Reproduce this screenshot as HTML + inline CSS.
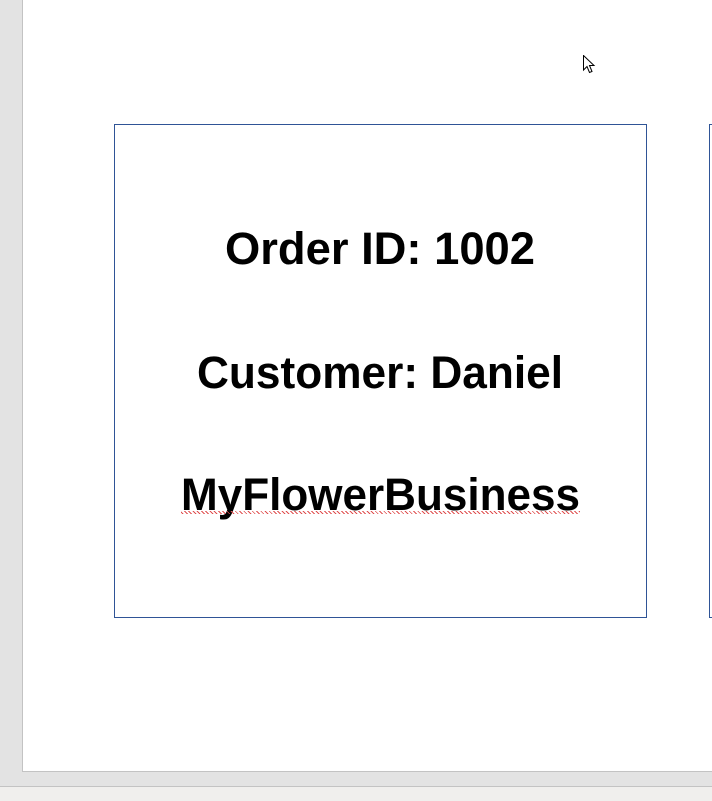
<!DOCTYPE html>
<html><head><style>
html,body{margin:0;padding:0;width:712px;height:800px;overflow:hidden;background:#e3e3e3;}
.page{position:absolute;left:22px;top:0;width:690px;height:772px;background:#fff;border-left:1px solid #c3c3c3;border-bottom:1px solid #c3c3c3;box-sizing:border-box;}
.bar{position:absolute;left:0;top:786px;width:712px;height:14px;background:#f0efed;border-top:1px solid #c3c3c3;}
.box{position:absolute;left:114px;top:124px;width:533px;height:494px;border:1px solid #2f5496;box-sizing:border-box;}
.box2{position:absolute;left:709px;top:124px;width:10px;height:494px;border:1px solid #2f5496;box-sizing:border-box;}
.l{position:absolute;left:0;top:0;white-space:nowrap;font-family:"Liberation Sans",sans-serif;font-weight:bold;font-size:45px;line-height:45px;color:#000;transform-origin:0 0;}
.sq{position:absolute;left:181px;top:511px;width:399px;height:3px;background:repeating-linear-gradient(45deg,transparent 0 1px,#e05050 1px 2px,transparent 2px 3px);}
</style></head><body>
<div class="page"></div>
<div class="bar"></div>
<div class="box"></div>
<div class="box2"></div>
<div class="l" data-x="225" data-w="310" style="top:226px">Order ID: 1002</div>
<div class="l" data-x="197" data-w="366" style="top:350px">Customer: Daniel</div>
<div class="l" data-x="181" data-w="399" style="top:472px">MyFlowerBusiness</div>
<div class="sq"></div>
<svg style="position:absolute;left:583px;top:55px" width="14" height="20" viewBox="0 0 14 20"><path d="M0.5 0.5 L0.5 15 L4 11.5 L6.5 17.5 L9 16.5 L6.5 10.5 L11 10.5 Z" fill="#fff" stroke="#000" stroke-width="1"/></svg>
<script>
document.querySelectorAll('.l').forEach(function(e){var w=e.getBoundingClientRect().width;e.style.left=e.dataset.x+'px';e.style.transform='scaleX('+(e.dataset.w/w)+')';});
</script>
</body></html>
